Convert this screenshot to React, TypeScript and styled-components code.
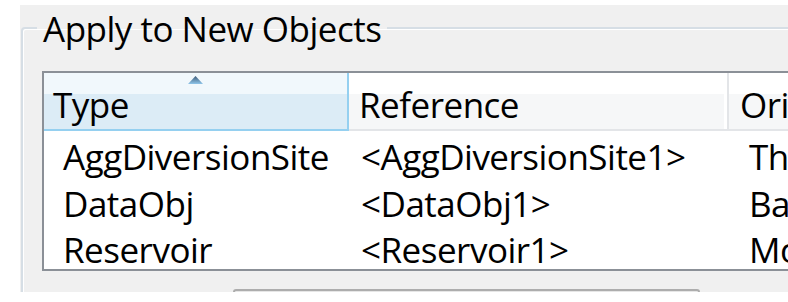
import React from "react";
import styled, { createGlobalStyle } from "styled-components";

const GlobalStyle = createGlobalStyle`
  html, body {
    margin: 0;
    padding: 0;
    background: #ffffff;
    overflow: hidden;
  }
`;

type Row = {
  type: string;
  reference: string;
  other: string;
};

const rows: Row[] = [
  { type: "AggDiversionSite", reference: "<AggDiversionSite1>", other: "Th" },
  { type: "DataObj", reference: "<DataObj1>", other: "Ba" },
  { type: "Reservoir", reference: "<Reservoir1>", other: "Mo" },
];

const SortArrow = () => (
  <svg width="15" height="8" viewBox="0 0 15 8">
    <defs>
      <linearGradient id="arrowFill" x1="0" y1="0" x2="0" y2="1">
        <stop offset="0" stopColor="#3c5a78" />
        <stop offset="1" stopColor="#8fc6ea" />
      </linearGradient>
    </defs>
    <polygon points="7.5,0 15,8 0,8" fill="url(#arrowFill)" />
  </svg>
);

const App = () => {
  return (
    <>
      <GlobalStyle />
      <Frame>
        <Dialog>
          <GroupBox>
            <Legend>Apply to New Objects</Legend>
            <ListView>
              <HeaderRow>
                <HeaderCell sorted pad={9}>
                  <ArrowSpot>
                    <SortArrow />
                  </ArrowSpot>
                  Type
                </HeaderCell>
                <HeaderCell pad={10}>Reference</HeaderCell>
                <HeaderCell pad={11} last>
                  Origin
                </HeaderCell>
              </HeaderRow>
              <Body>
                {rows.map((row, index) => (
                  <ItemRow key={index}>
                    <Cell pad={19}>{row.type}</Cell>
                    <Cell pad={12}>{row.reference}</Cell>
                    <Cell pad={20}>{row.other}</Cell>
                  </ItemRow>
                ))}
              </Body>
            </ListView>
            <ButtonRow>
              <PushButton />
            </ButtonRow>
          </GroupBox>
        </Dialog>
      </Frame>
    </>
  );
};

export default App;

const Frame = styled.div`
  width: 788px;
  height: 302px;
  overflow: hidden;
  box-sizing: border-box;
  padding: 5px 0 0 20px;
  background: #ffffff;
  font-family: "Open Sans", "Noto Sans", sans-serif;
  color: #000000;
`;

const Dialog = styled.div`
  width: 900px;
  height: 287px;
  overflow: hidden;
  background: #f0f0f0;
  padding-left: 1px;
`;

const GroupBox = styled.fieldset`
  margin: 0;
  width: 960px;
  min-width: 0;
  box-sizing: border-box;
  padding: 20px 0 0 19px;
  border: 2px solid #d6dee5;
  border-radius: 4px;
  box-shadow: inset 1px 1px 0 #ffffff;
`;

const Legend = styled.legend`
  margin-left: -5px;
  padding: 2px 6px 0 6px;
  font-size: 35px;
  line-height: 44px;
  letter-spacing: -0.5px;
  color: #000000;
`;

const ListView = styled.div`
  width: 900px;
  height: 200px;
  box-sizing: border-box;
  border: 2px solid #8b9097;
  background: #ffffff;
  overflow: hidden;
  font-size: 35px;
  letter-spacing: -0.5px;
`;

const HeaderRow = styled.div`
  display: grid;
  grid-template-columns: 305px 380px 1fr;
  height: 58px;
`;

const HeaderCell = styled.div<{ sorted?: boolean; pad: number; last?: boolean }>`
  position: relative;
  box-sizing: border-box;
  height: 58px;
  padding: 9px 0 0 ${(p) => p.pad}px;
  line-height: 46px;
  white-space: nowrap;
  background: ${(p) =>
    p.sorted
      ? "linear-gradient(#f1f8fc 0, #f1f8fc 21px, #dcecf6 21px, #dcecf6 100%)"
      : "linear-gradient(#ffffff 0, #ffffff 21px, #f6f7f8 21px, #f6f7f8 100%)"};
  border-bottom: 2px solid ${(p) => (p.sorted ? "#95d0f0" : "#e3e5e8")};
  border-right: 2px solid ${(p) => (p.sorted ? "#95d0f0" : "#e3e5e8")};
  box-shadow: ${(p) => (p.sorted || p.last ? "none" : "inset -3px 0 0 #ffffff")};
`;

const ArrowSpot = styled.span`
  position: absolute;
  top: 3px;
  left: 0;
  right: 0;
  display: flex;
  justify-content: center;
  line-height: 0;
`;

const Body = styled.div`
  padding-top: 3px;
`;

const ItemRow = styled.div`
  display: grid;
  grid-template-columns: 305px 380px 1fr;
  height: 46.5px;
  line-height: 46px;
`;

const Cell = styled.div<{ pad: number }>`
  padding-left: ${(p) => p.pad}px;
  white-space: nowrap;
  overflow: hidden;
`;

const ButtonRow = styled.div`
  display: flex;
  padding: 18px 0 0 191px;
`;

const PushButton = styled.div`
  width: 467px;
  height: 30px;
  box-sizing: border-box;
  border: 2px solid #adadad;
  border-radius: 3px;
  background: #e6e6e6;
`;
